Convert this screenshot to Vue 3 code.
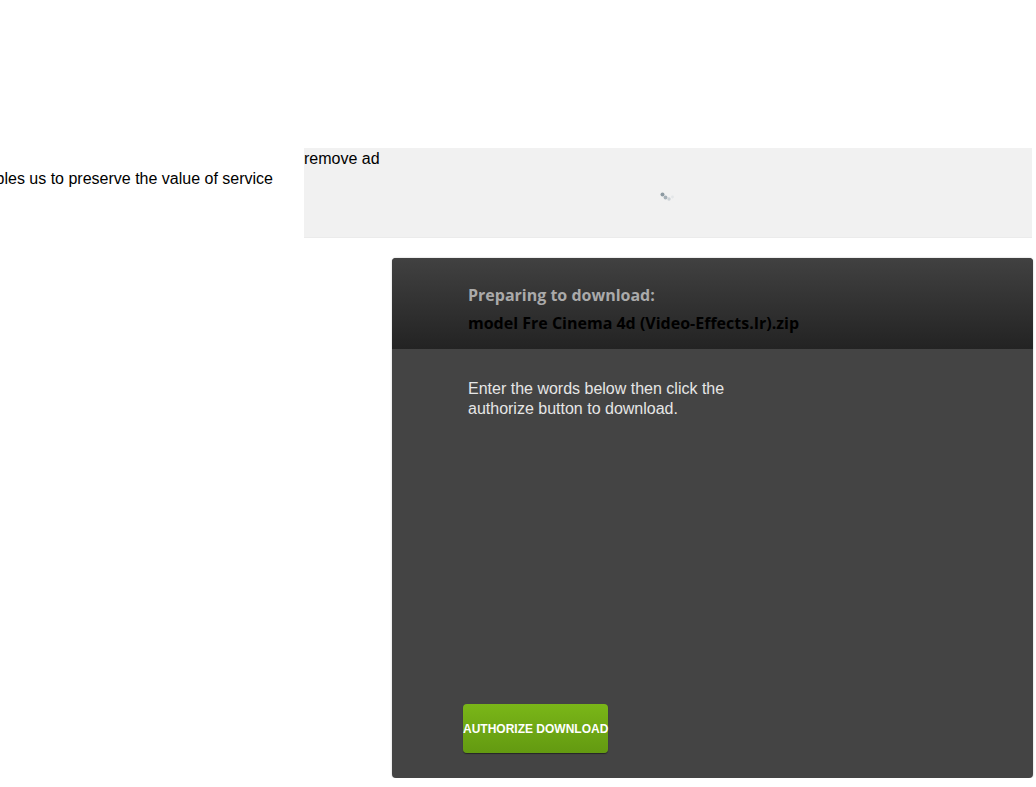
<script setup>
</script>

<template>
  <div class="page">
    <div class="side">
      <p class="note">enables us to preserve the value of service</p>
    </div>
    <div class="main">
      <div class="ad">
        <div class="remove">remove ad</div>
        <div class="loader">
          <svg width="16" height="12" viewBox="0 0 16 12" aria-hidden="true">
            <circle cx="2.5" cy="2.5" r="2" fill="#8d9aa2" />
            <circle cx="5.5" cy="5.5" r="1.9" fill="#a6b1b8" />
            <circle cx="9" cy="7" r="1.7" fill="#ccd2d6" />
            <circle cx="12.5" cy="5" r="1.4" fill="#e3e6e8" />
          </svg>
        </div>
      </div>
      <section class="panel">
        <header class="head">
          <div class="prep">Preparing to download:</div>
          <div class="file">model Fre Cinema 4d (Video-Effects.Ir).zip</div>
        </header>
        <div class="body">
          <p class="intro">Enter the words below then click the<br />authorize button to download.</p>
          <button class="auth" type="button">AUTHORIZE DOWNLOAD</button>
        </div>
      </section>
    </div>
  </div>
</template>

<style>
html, body { margin: 0; background: #fff; overflow: hidden; }
</style>

<style scoped>
.page {
  display: flex;
  width: 1033px;
  padding-top: 148px;
  font-family: "Liberation Sans", Arial, sans-serif;
  color: #000;
}
.side {
  flex: 0 0 304px;
  width: 304px;
  overflow: hidden;
  display: flex;
  justify-content: flex-end;
}
.note {
  margin: 21px 31px 0 0;
  font-size: 16px;
  line-height: 20px;
  white-space: nowrap;
  flex: none;
}
.main { flex: 1; min-width: 0; }
.ad {
  width: 728px;
  height: 90px;
  box-sizing: border-box;
  background: #f1f1f1;
  border-bottom: 1px solid #ebebeb;
  display: flex;
  flex-direction: column;
}
.remove { font-size: 16px; line-height: 20px; padding-top: 1px; }
.loader {
  display: flex;
  justify-content: center;
  padding-top: 23px;
}
.panel {
  margin: 20px 0 0 88px;
  width: 641px;
  height: 520px;
  background: #444;
  border-radius: 4px;
  overflow: hidden;
  display: flex;
  flex-direction: column;
  box-shadow: 0 0 2px rgba(0, 0, 0, 0.25);
}
.head {
  height: 91px;
  box-sizing: border-box;
  padding: 23px 0 0 76px;
  background: linear-gradient(#414141, #232323);
  font-family: "Open Sans", sans-serif;
  font-weight: 700;
  font-size: 16px;
  line-height: 28px;
}
.prep { color: #aaa; }
.file { color: #000; }
.body {
  flex: 1;
  display: flex;
  flex-direction: column;
  padding: 30px 0 25px 76px;
}
.intro {
  margin: 0;
  font-size: 16px;
  line-height: 20px;
  color: #e6e6e6;
}
.auth {
  margin: auto 0 0 -5px;
  width: 145px;
  height: 49px;
  padding: 0;
  border: 0;
  border-radius: 4px;
  background: linear-gradient(#7ab618, #639a11);
  box-shadow: 0 1px 1px rgba(0, 0, 0, 0.45);
  color: #fff;
  font-family: "Liberation Sans", Arial, sans-serif;
  font-weight: 700;
  font-size: 12px;
  white-space: nowrap;
}
</style>
